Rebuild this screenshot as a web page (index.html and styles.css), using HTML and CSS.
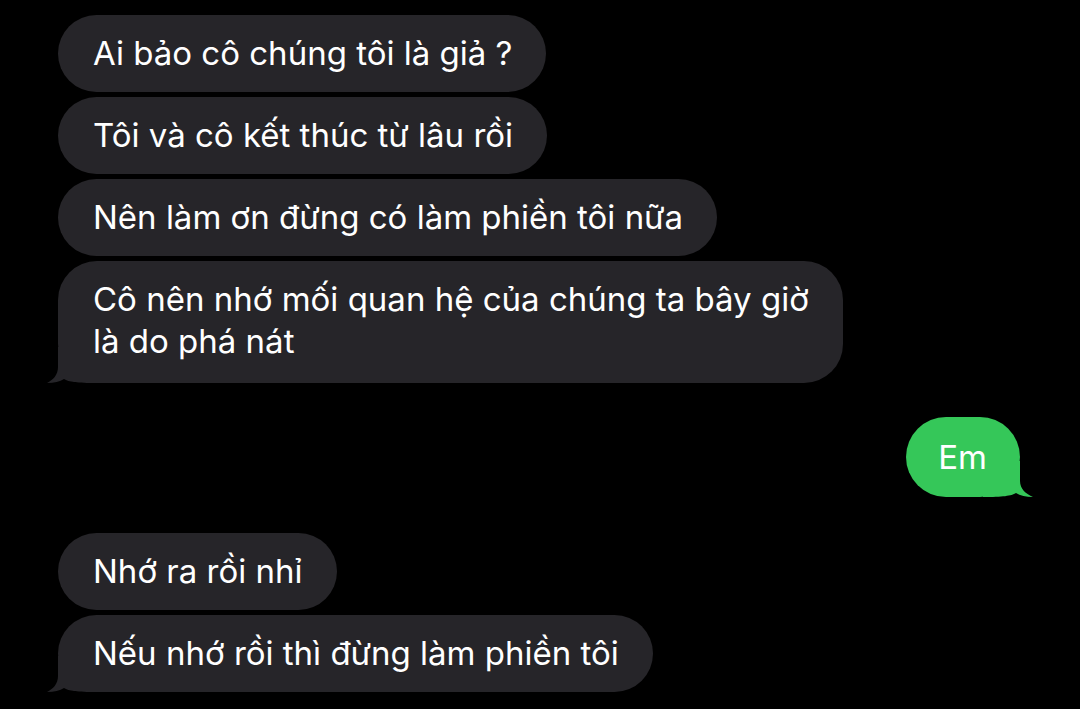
FILE: index.html
```html
<!DOCTYPE html>
<html lang="vi">
<head>
  <meta charset="UTF-8">
  <meta name="viewport" content="width=device-width, initial-scale=1.0">
  <title>Tin nhắn</title>
  <link rel="stylesheet" href="styles.css">
</head>
<body>
  <div class="thread">
    <div class="group">
      <div class="bubble"><span class="text">Ai bảo cô chúng tôi là giả ?</span></div>
      <div class="bubble"><span class="text">Tôi và cô kết thúc từ lâu rồi</span></div>
      <div class="bubble"><span class="text">Nên làm ơn đừng có làm phiền tôi nữa</span></div>
      <div class="bubble multi">
        <svg class="tail-icon" viewBox="0 0 50 36"><path d="M11 0 L11 20 C11 28 6 33 0 36 C7 36 13 34.5 17 32 C22 35 30 36 50 36 L50 0 Z"/></svg>
        <span class="text">Cô nên nhớ mối quan hệ của chúng ta bây giờ<br>là do phá nát</span>
      </div>
    </div>

    <div class="group mine">
      <div class="bubble green">
        <svg class="tail-icon" viewBox="0 0 50 36"><path d="M37 0 L37 20 C37 28 43 33 50 36 C43 36 37 34.5 33 32 C28 35 20 36 0 36 L0 0 Z"/></svg>
        <span class="text">Em</span>
      </div>
    </div>

    <div class="group">
      <div class="bubble"><span class="text">Nhớ ra rồi nhỉ</span></div>
      <div class="bubble">
        <svg class="tail-icon" viewBox="0 0 50 36"><path d="M11 0 L11 20 C11 28 6 33 0 36 C7 36 13 34.5 17 32 C22 35 30 36 50 36 L50 0 Z"/></svg>
        <span class="text">Nếu nhớ rồi thì đừng làm phiền tôi</span>
      </div>
    </div>
  </div>
</body>
</html>
```

FILE: styles.css
```css
body {
  margin: 0;
  background-color: #000;
  font-family: Inter, 'Noto Sans', Roboto, sans-serif;
  color: #fff;
}

.thread {
  display: flex;
  flex-direction: column;
  gap: 34px;
  padding: 15px 60px 0 58px;
}

.group {
  display: flex;
  flex-direction: column;
  align-items: flex-start;
  gap: 5px;
}

.group.mine {
  align-items: flex-end;
  margin-bottom: 2px;
}

.bubble {
  position: relative;
  background-color: #262529;
  font-size: 33px;
  line-height: 42px;
  padding: 17px 34px 18px 35px;
  border-radius: 39px;
}

.bubble .text {
  position: relative;
}

.bubble.multi {
  padding-bottom: 21px;
}

.bubble.green {
  background-color: #35c759;
  padding: 19px 33px 19px 32px;
  border-radius: 40px;
}

.tail-icon {
  position: absolute;
  bottom: 0;
  left: -11px;
  width: 50px;
  height: 36px;
  fill: #262529;
}

.green .tail-icon {
  left: auto;
  right: -13px;
  fill: #35c759;
}
```
